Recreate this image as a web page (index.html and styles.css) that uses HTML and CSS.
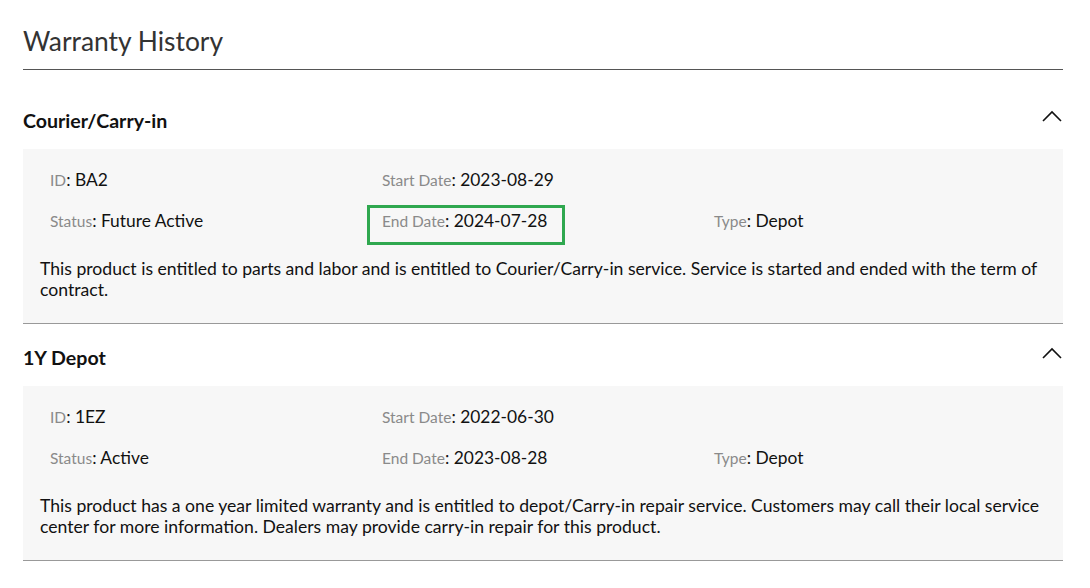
FILE: index.html
```html
<!doctype html>
<html>
<head>
    <meta charset="utf-8">
    <title>Warranty History</title>
    <link rel="stylesheet" href="styles.css">
</head>
<body>
<div id="warranty">
    <h2 class="pageTitle">Warranty History</h2>

    <section class="entry first">
        <div class="entryHead">
            <h3>Courier/Carry-in</h3>
            <svg class="chevron" width="20" height="12" viewBox="0 0 20 12"><path d="M1 11 L10 2 L19 11" fill="none" stroke="#111" stroke-width="1.6"/></svg>
        </div>
        <div class="entryBody">
            <div class="fields">
                <div class="field"><span class="label">ID</span>: BA2</div>
                <div class="field"><span class="label">Start Date</span>: 2023-08-29</div>
                <div class="field"></div>
                <div class="field"><span class="label">Status</span>: Future Active</div>
                <div class="field marked"><span class="label">End Date</span>: 2024-07-28</div>
                <div class="field"><span class="label">Type</span>: Depot</div>
            </div>
            <p>This product is entitled to parts and labor and is entitled to Courier/Carry-in service. Service is started and ended with the term of contract.</p>
        </div>
    </section>

    <section class="entry">
        <div class="entryHead">
            <h3>1Y Depot</h3>
            <svg class="chevron" width="20" height="12" viewBox="0 0 20 12"><path d="M1 11 L10 2 L19 11" fill="none" stroke="#111" stroke-width="1.6"/></svg>
        </div>
        <div class="entryBody">
            <div class="fields">
                <div class="field"><span class="label">ID</span>: 1EZ</div>
                <div class="field"><span class="label">Start Date</span>: 2022-06-30</div>
                <div class="field"></div>
                <div class="field"><span class="label">Status</span>: Active</div>
                <div class="field"><span class="label">End Date</span>: 2023-08-28</div>
                <div class="field"><span class="label">Type</span>: Depot</div>
            </div>
            <p>This product has a one year limited warranty and is entitled to depot/Carry-in repair service. Customers may call their local service center for more information. Dealers may provide carry-in repair for this product.</p>
        </div>
    </section>
</div>
</body>
</html>
```

FILE: styles.css
```css
html {
    color: #111;
    background-color: #fff;
    font-family: Lato, "Open Sans", sans-serif;
}

body {
    margin: 0;
}

#warranty {
    width: 1040px;
    margin: 0 0 0 23px;
}

.pageTitle {
    font-size: 26.4px;
    font-weight: normal;
    color: #333;
    margin: 0;
    padding-top: 25px;
    line-height: 32px;
    padding-bottom: 12px;
    border-bottom: 1px solid #555;
}

.entry {
    border-bottom: 1px solid #999;
}

.entry.first {
    margin-top: 17px;
}

.entryHead {
    box-sizing: border-box;
    height: 62px;
    padding-top: 4px;
    display: flex;
    align-items: center;
    justify-content: space-between;
    padding-right: 1px;
}

.entryHead h3 {
    margin: 0;
    font-size: 19.6px;
    font-weight: bold;
}

.chevron {
    display: block;
    margin-top: -9px;
}

.entryBody {
    background-color: #f7f7f7;
    padding: 10px 17px 23px;
}

.fields {
    display: grid;
    grid-template-columns: 332px 332px 1fr;
    padding-left: 10px;
}

.field {
    height: 41px;
    line-height: 41px;
    font-size: 17.4px;
}

.label {
    font-size: 15.5px;
    color: #8a8a8a;
}

.marked {
    position: relative;
    justify-self: start;
}

.marked::after {
    content: "";
    position: absolute;
    left: -15px;
    right: -18px;
    top: 5px;
    bottom: -4px;
    border: 3px solid #2fa84f;
}

.entryBody p {
    margin: 17px 0 0;
    font-size: 17.6px;
    line-height: 21px;
}
```
